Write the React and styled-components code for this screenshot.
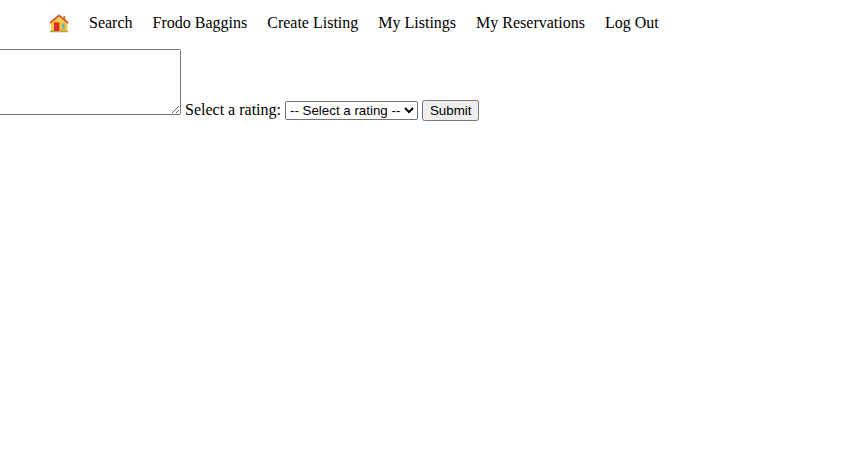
import React from 'react';
import styled, { createGlobalStyle } from 'styled-components';

const GlobalStyle = createGlobalStyle`
  body {
    margin: 0;
    background: #fff;
    color: #000;
    font: 16px "Liberation Serif", serif;
    overflow: hidden;
  }
`;

const Nav = styled.nav`
  display: flex;
  gap: 20px;
  height: 18px;
  padding: 14px 0 0 49px;
  line-height: 18px;
  white-space: nowrap;
`;

const NavLink = styled.a`
  color: #000;
  text-decoration: none;
`;

const HouseIcon = styled.svg`
  display: block;
  flex: none;
  width: 20px;
  height: 20px;
  margin-top: -1px;
`;

const ReviewForm = styled.form`
  margin: 17px 0 0 -2px;
  white-space: nowrap;
`;

const Comment = styled.textarea`
  width: 177px;
  height: 60px;
`;

const links = ['Search', 'Frodo Baggins', 'Create Listing', 'My Listings', 'My Reservations', 'Log Out'];

function House() {
  return (
    <HouseIcon viewBox="0 0 60 60" role="img" aria-label="Home">
      <path d="M43 9h6v14h-6z" fill="#dd7a3c" />
      <path d="M6 28 30 8l25 20v28H6z" fill="#f9cb35" />
      <path d="M6 50h49v6H6z" fill="#f2b92f" />
      <path d="M4 29 30 7l26 22" fill="none" stroke="#db432d" strokeWidth="4.4" strokeLinejoin="round" strokeLinecap="round" />
      <circle cx="30" cy="20" r="3.5" fill="#8fc3cf" stroke="#f8dc72" strokeWidth="2" />
      <path d="M15 28h16v27H15z" fill="#d92c2c" />
      <path d="M38 31h10v16H38z" fill="#5fb0d8" stroke="#f5c451" strokeWidth="2" />
      <path d="M36 48h14v2H36z" fill="#df9130" />
      <path d="M3 54h12v4H3zM31 55h27v3H31z" fill="#93a444" />
      <path d="M15 55h16v3H15z" fill="#a5a5a5" />
    </HouseIcon>
  );
}

export default function App() {
  return (
    <>
      <GlobalStyle />
      <Nav>
        <NavLink><House /></NavLink>
        {links.map((label) => (
          <NavLink key={label}>{label}</NavLink>
        ))}
      </Nav>
      <ReviewForm>
        <Comment />{' '}
        <label htmlFor="rating">Select a rating:</label>{' '}
        <select id="rating" defaultValue="">
          <option value="">-- Select a rating --</option>
          <option>1</option>
          <option>2</option>
          <option>3</option>
          <option>4</option>
          <option>5</option>
        </select>{' '}
        <button type="button">Submit</button>
      </ReviewForm>
    </>
  );
}
